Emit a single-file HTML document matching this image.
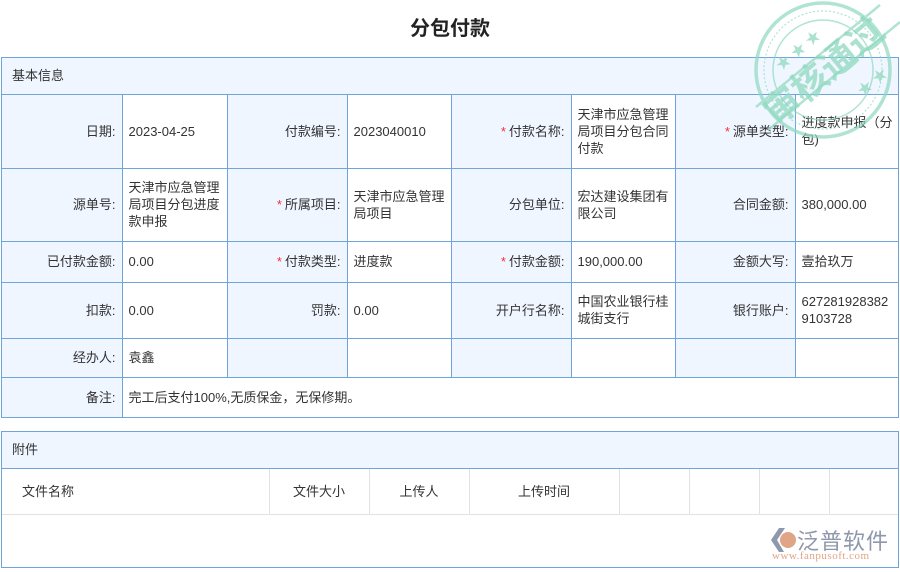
<!DOCTYPE html>
<html><head><meta charset="utf-8"><style>
*{margin:0;padding:0;box-sizing:border-box}
body{width:900px;height:572px;background:#fff;font-family:"Liberation Sans","Noto Sans CJK SC",sans-serif;font-size:13px;color:#333;position:relative;overflow:hidden}
.t{position:absolute;left:0;width:900px;top:12px;text-align:center;font-size:20px;font-weight:bold;color:#222}
.p{position:absolute;border:1px solid #6fa5d8}
.h{background:#f0f6ff;height:37px;line-height:36px;padding-left:10px;border-bottom:1px solid #6fa5d8}
table{border-collapse:collapse;width:100%;table-layout:fixed}
td{border:1px solid #6fa5d8;vertical-align:middle;line-height:17px;padding:0 6px}
td.l{background:#f0f6ff;text-align:right;padding-right:6px}
.b tr td:first-child{border-left:none}.b tr td:last-child{border-right:none}
.b tr:first-child td{border-top:none}
.b tr:last-child td{border-bottom:none}
.s{color:#e33;margin-right:3px}
.a td{border:1px solid #e2e2e2;border-top:none;background:#fff}
</style></head><body>
<div class="t">分包付款</div>
<div class="p" style="left:1px;top:57px;width:898px">
<div class="h">基本信息</div>
<table class="b">
<colgroup><col style="width:120px"><col style="width:105px"><col style="width:120px"><col style="width:104px"><col style="width:120px"><col style="width:104px"><col style="width:120px"><col></colgroup>
<tr style="height:73px"><td class="l">日期:</td><td>2023-04-25</td><td class="l">付款编号:</td><td>2023040010</td><td class="l"><span class="s">*</span>付款名称:</td><td>天津市应急管理局项目分包合同付款</td><td class="l"><span class="s">*</span>源单类型:</td><td style="padding-right:0">进度款申报（分<br>包)</td></tr>
<tr style="height:73px"><td class="l">源单号:</td><td>天津市应急管理局项目分包进度款申报</td><td class="l"><span class="s">*</span>所属项目:</td><td>天津市应急管理局项目</td><td class="l">分包单位:</td><td>宏达建设集团有限公司</td><td class="l">合同金额:</td><td>380,000.00</td></tr>
<tr style="height:41px"><td class="l">已付款金额:</td><td>0.00</td><td class="l"><span class="s">*</span>付款类型:</td><td>进度款</td><td class="l"><span class="s">*</span>付款金额:</td><td>190,000.00</td><td class="l">金额大写:</td><td>壹拾玖万</td></tr>
<tr style="height:56px"><td class="l">扣款:</td><td>0.00</td><td class="l">罚款:</td><td>0.00</td><td class="l">开户行名称:</td><td>中国农业银行桂城街支行</td><td class="l">银行账户:</td><td style="word-break:break-all">6272819283829103728</td></tr>
<tr style="height:39px"><td class="l">经办人:</td><td>袁鑫</td><td class="l"></td><td></td><td class="l"></td><td></td><td class="l"></td><td></td></tr>
<tr style="height:40px"><td class="l">备注:</td><td colspan="7">完工后支付100%,无质保金，无保修期。</td></tr>
</table></div>
<div class="p" style="left:1px;top:431px;width:898px;height:137px">
<div class="h">附件</div>
<table class="a"><colgroup><col style="width:267px"><col style="width:100px"><col style="width:100px"><col style="width:150px"><col style="width:70px"><col style="width:70px"><col style="width:70px"><col></colgroup>
<tr style="height:45px"><td style="padding-left:20px;border-left:none">文件名称</td><td style="text-align:center">文件大小</td><td style="text-align:center">上传人</td><td style="text-align:center">上传时间</td><td></td><td></td><td></td><td style="border-right:none"></td></tr></table>
</div>
<svg style="position:absolute;left:740px;top:0" width="160" height="150">
<g fill="none" stroke="#8fd9bf" opacity="0.7">
<circle cx="83" cy="70" r="67" stroke-width="3.5"/>
<circle cx="83" cy="70" r="59" stroke-width="1.2" stroke-dasharray="2 2"/>
<circle cx="83" cy="70" r="50" stroke-width="1.5"/>
<line x1="16" y1="107" x2="140" y2="5" stroke-width="2.5"/>
<line x1="28" y1="130" x2="160" y2="22" stroke-width="2.5"/>
</g>
<text x="83" y="84" transform="rotate(-40 83 70)" text-anchor="middle" font-size="36" font-weight="bold" fill="#8fd9bf" opacity="0.75" font-family="Noto Sans CJK SC,sans-serif">审核通过</text>
<text x="50" y="44" font-size="15" fill="#8fd9bf" opacity="0.75" transform="rotate(-40 83 70)">★ ★ ★</text>
<text x="96" y="116" font-size="15" fill="#8fd9bf" opacity="0.75" transform="rotate(-40 83 70)">★ ★</text>
</svg>
<div style="position:absolute;left:770px;top:526px;width:125px;height:40px">
<svg width="28" height="26" style="position:absolute;left:0;top:1px"><path d="M9 1 L1 13 L9 25 L14 25 L7 13 L15 1Z" fill="#8e97ab"/><circle cx="18" cy="13" r="8" fill="#e0a585"/></svg>
<div style="position:absolute;left:27px;top:-2px;font-size:22px;color:#8e97ab;letter-spacing:1px;white-space:nowrap">泛普软件</div>
<div style="position:absolute;left:2px;top:24px;font-size:11px;color:#e0a585;font-family:'Liberation Serif',serif;white-space:nowrap;letter-spacing:0.5px">www.fanpusoft.com</div>
</div>
</body></html>
